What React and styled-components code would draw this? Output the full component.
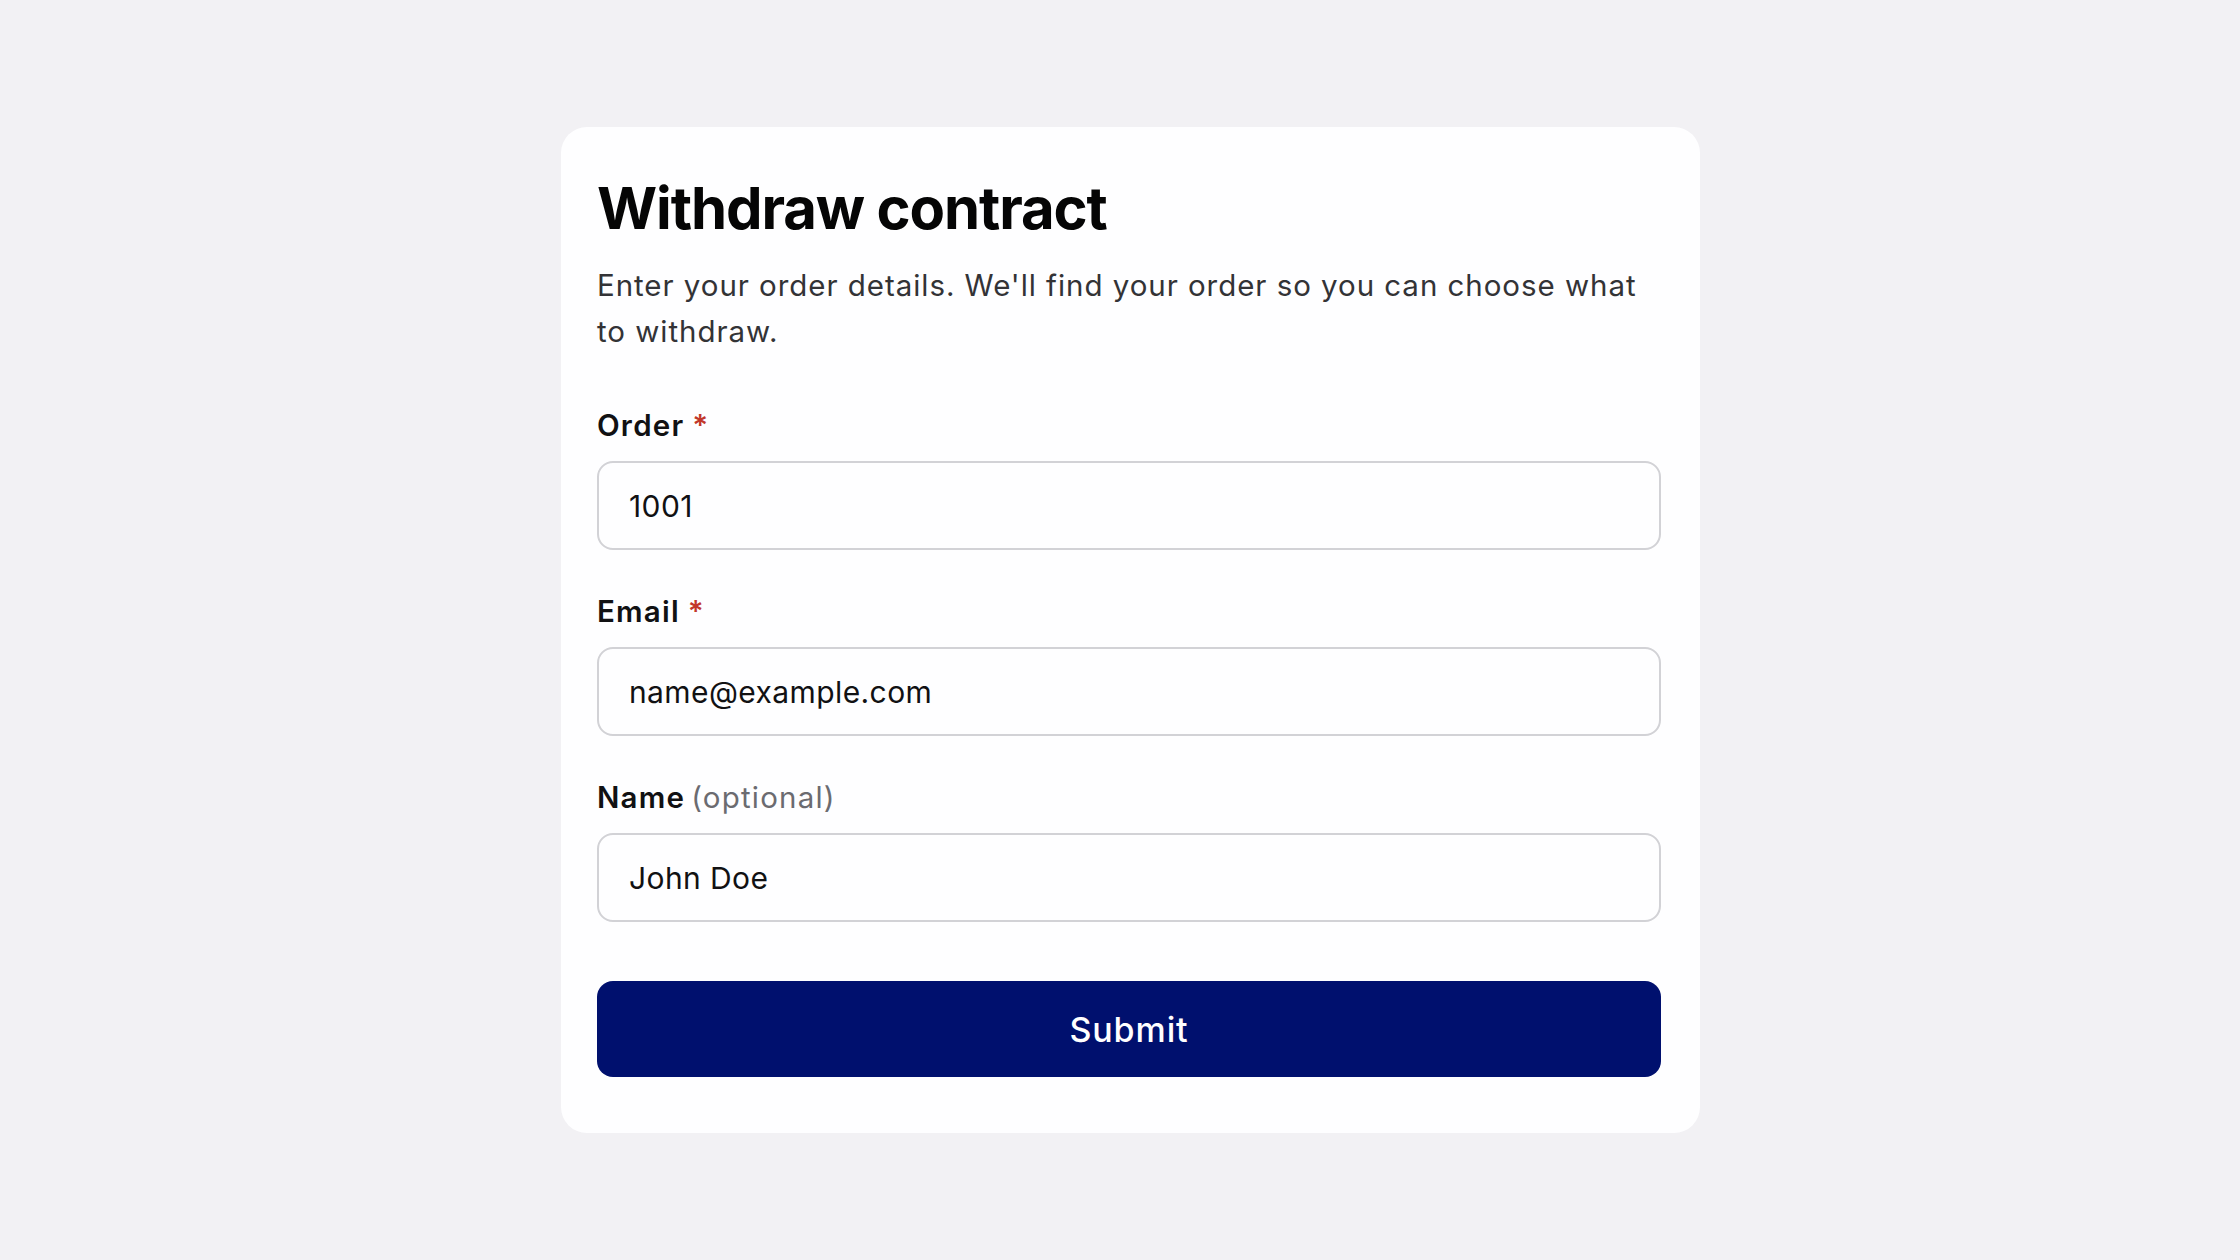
import React from "react";
import styled, { createGlobalStyle } from "styled-components";

const GlobalStyle = createGlobalStyle`
  html, body {
    margin: 0;
    padding: 0;
    background: #f2f1f4;
    font-family: Inter, "Noto Sans", "Liberation Sans", sans-serif;
  }
  * { box-sizing: border-box; }
`;

const Page = styled.div`
  min-height: 1260px;
  padding: 127px 0 0 561px;
`;

const Card = styled.form`
  width: 1139px;
  background: #fefeff;
  border-radius: 26px;
  padding: 45px 39px 56px 36px;
  display: flex;
  flex-direction: column;
`;

const Title = styled.h1`
  margin: 0;
  font-size: 58px;
  line-height: 72px;
  font-weight: 700;
  color: #050505;
  letter-spacing: -1.1px;
`;

const Intro = styled.p`
  margin: 18px 0 0;
  font-size: 29.5px;
  line-height: 46px;
  font-weight: 400;
  color: #333336;
  letter-spacing: 0.95px;
`;

const Fields = styled.div`
  margin-top: 53px;
  display: flex;
  flex-direction: column;
  gap: 43px;
`;

const Field = styled.label`
  display: flex;
  flex-direction: column;
  gap: 18px;
`;

const LabelText = styled.span`
  font-size: 29.5px;
  line-height: 36px;
  font-weight: 600;
  color: #111113;
  letter-spacing: 1.2px;
`;

const Required = styled.span`
  color: #c2372a;
  margin-left: 8px;
`;

const Hint = styled.span`
  color: #6b6b70;
  font-weight: 400;
  margin-left: 6px;
`;

const Input = styled.input`
  height: 89px;
  width: 100%;
  padding: 0 30px;
  border: 2px solid #d2d2d6;
  border-radius: 16px;
  background: #fefeff;
  font-family: inherit;
  font-size: 30px;
  letter-spacing: 0.4px;
  color: #111113;
  outline: none;
`;

const SubmitButton = styled.button`
  margin-top: 59px;
  height: 96px;
  width: 100%;
  border: none;
  border-radius: 16px;
  background: #00106e;
  color: #ffffff;
  font-family: inherit;
  font-size: 34px;
  font-weight: 500;
  letter-spacing: 0.9px;
  cursor: pointer;
`;

const fields = [
  { name: "order", label: "Order", value: "1001", required: true },
  { name: "email", label: "Email", value: "name@example.com", required: true },
  { name: "name", label: "Name", value: "John Doe", required: false },
];

export default function App() {
  return (
    <>
      <GlobalStyle />
      <Page>
        <Card onSubmit={(e) => e.preventDefault()}>
          <Title>Withdraw contract</Title>
          <Intro>
            Enter your order details. We'll find your order so you can choose
            what to withdraw.
          </Intro>
          <Fields>
            {fields.map((f) => (
              <Field key={f.name}>
                <LabelText>
                  {f.label}
                  {f.required ? <Required>*</Required> : <Hint>(optional)</Hint>}
                </LabelText>
                <Input name={f.name} defaultValue={f.value} />
              </Field>
            ))}
          </Fields>
          <SubmitButton type="submit">Submit</SubmitButton>
        </Card>
      </Page>
    </>
  );
}
